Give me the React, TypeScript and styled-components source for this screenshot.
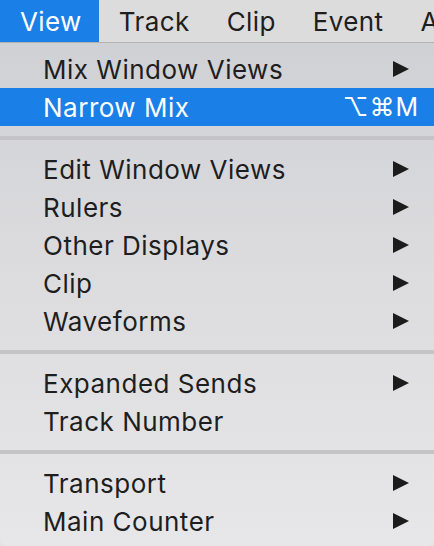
import React from 'react'
import styled, { createGlobalStyle } from 'styled-components'

const GlobalStyle = createGlobalStyle`
  html, body {
    margin: 0;
    padding: 0;
    background: #e4e4e6;
  }
  body {
    font-family: Inter, "Noto Sans", "Liberation Sans", sans-serif;
    -webkit-font-smoothing: antialiased;
  }
`

const Screen = styled.div`
  width: 434px;
  height: 546px;
  overflow: hidden;
  display: flex;
  flex-direction: column;
`

const MenuBar = styled.div`
  height: 43px;
  display: flex;
  align-items: stretch;
  background: #dcdcdd;
  border-bottom: 1px solid #b3b3b6;
  overflow: hidden;
`

const MenuTitle = styled.div<{ $active?: boolean }>`
  display: flex;
  align-items: center;
  padding: 0 17px 0 20px;
  font-size: 26px;
  letter-spacing: 0.4px;
  color: ${(p) => (p.$active ? '#ffffff' : '#1e1e1e')};
  background: ${(p) => (p.$active ? '#1a7fe6' : 'transparent')};
  white-space: nowrap;
`

const Dropdown = styled.div`
  flex: 1;
  padding: 7px 0 6px;
  background: linear-gradient(180deg, #d0d1d5 0%, #dcdcdf 45%, #e7e7e9 100%);
  border-radius: 0 0 8px 8px;
`

const Item = styled.div<{ $selected?: boolean }>`
  height: 38px;
  display: flex;
  align-items: center;
  padding: 0 15px 0 43px;
  font-size: 26px;
  letter-spacing: 0.5px;
  color: ${(p) => (p.$selected ? '#ffffff' : '#1e1e1e')};
  background: ${(p) => (p.$selected ? '#1a7fe6' : 'transparent')};
`

const Label = styled.span`
  flex: 1;
  white-space: nowrap;
`

const Shortcut = styled.span`
  font-size: 25px;
  letter-spacing: 1px;
`

const Arrow = styled.svg`
  width: 18px;
  height: 18px;
  margin-right: 9px;
  fill: #1c1c1c;
`

const Separator = styled.div`
  height: 4px;
  margin: 10px 0;
  background: #c4c4c8;
`

type Entry = { label: string; sub?: boolean; shortcut?: string; selected?: boolean }

const groups: Entry[][] = [
  [
    { label: 'Mix Window Views', sub: true },
    { label: 'Narrow Mix', shortcut: '⌥⌘M', selected: true },
  ],
  [
    { label: 'Edit Window Views', sub: true },
    { label: 'Rulers', sub: true },
    { label: 'Other Displays', sub: true },
    { label: 'Clip', sub: true },
    { label: 'Waveforms', sub: true },
  ],
  [
    { label: 'Expanded Sends', sub: true },
    { label: 'Track Number' },
  ],
  [
    { label: 'Transport', sub: true },
    { label: 'Main Counter', sub: true },
  ],
]

function SubArrow() {
  return (
    <Arrow viewBox="0 0 18 18">
      <polygon points="1,1 17,9 1,17" />
    </Arrow>
  )
}

export default function App() {
  return (
    <>
      <GlobalStyle />
      <Screen>
        <MenuBar>
          <MenuTitle $active>View</MenuTitle>
          <MenuTitle>Track</MenuTitle>
          <MenuTitle>Clip</MenuTitle>
          <MenuTitle>Event</MenuTitle>
          <MenuTitle>A</MenuTitle>
        </MenuBar>
        <Dropdown>
          {groups.map((g, gi) => (
            <React.Fragment key={gi}>
              {gi > 0 && <Separator />}
              {g.map((e) => (
                <Item key={e.label} $selected={e.selected}>
                  <Label>{e.label}</Label>
                  {e.shortcut && <Shortcut>{e.shortcut}</Shortcut>}
                  {e.sub && <SubArrow />}
                </Item>
              ))}
            </React.Fragment>
          ))}
        </Dropdown>
      </Screen>
    </>
  )
}
